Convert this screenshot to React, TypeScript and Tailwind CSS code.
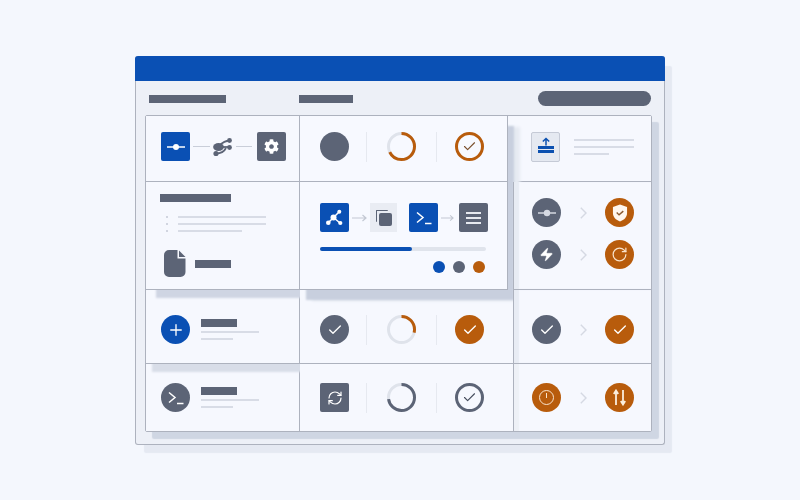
import type React from 'react';
import { Check, Plus, RefreshCw, RotateCw, Zap } from 'lucide-react';
import { FaCog } from 'react-icons/fa';

const SQUARE = 'flex h-[29px] w-[29px] shrink-0 items-center justify-center rounded-[2px]';
const CIRCLE = 'flex h-[29px] w-[29px] shrink-0 items-center justify-center rounded-full';

function Bar({ className }: { className: string }) {
  return <div className={`bg-[#5c6476] ${className}`} />;
}

function Line({ className }: { className: string }) {
  return <div className={`h-[2px] bg-[#d8dce6] ${className}`} />;
}

function Chevron() {
  return (
    <svg viewBox="0 0 7 12" className="h-[12px] w-[7px] shrink-0" fill="none" stroke="#d5d9e3" strokeWidth="1.4">
      <path d="M0.8 0.8 6 6 0.8 11.2" />
    </svg>
  );
}

function Ring({ percent, color }: { percent: number; color: string }) {
  return (
    <svg viewBox="0 0 29 29" className="h-[29px] w-[29px] shrink-0 -rotate-90" fill="none" strokeWidth="3">
      <circle cx="14.5" cy="14.5" r="13" stroke="#dfe3eb" />
      <circle cx="14.5" cy="14.5" r="13" stroke={color} pathLength={100} strokeDasharray={`${percent} 100`} />
    </svg>
  );
}

function Terminal({ size = 20 }: { size?: number }) {
  return (
    <svg width={size} height={size} viewBox="0 0 20 20" fill="none" stroke="white" strokeWidth="1.5">
      <path d="M3 4.500 9 9.500 3 14.500" />
      <path d="M11 15.500h6.500" />
    </svg>
  );
}

function SliderGlyph({ tint = 'white', dotR = 3 }: { tint?: string; dotR?: number }) {
  return (
    <svg width="20" height="10" viewBox="0 0 20 10" fill="none" stroke={tint} strokeWidth="1.5">
      <path d="M1 5h18" />
      <circle cx="10" cy="5" r={dotR} fill={tint} stroke="none" />
    </svg>
  );
}

function Fork() {
  return (
    <svg width="20" height="20" viewBox="0 0 20 20" className="shrink-0" fill="none" stroke="#5c6476" strokeWidth="1.8">
      <path d="M7 8 C9 6 11 4 16.500 3.500" />
      <path d="M7 10 H16.500" />
      <path d="M3 16.500 C7 16.500 11 15 13 11" />
      <ellipse cx="5.500" cy="10" rx="5.400" ry="4" fill="#5c6476" stroke="none" />
      <circle cx="16.500" cy="3.500" r="2.400" fill="#5c6476" stroke="none" />
      <circle cx="16.500" cy="10.500" r="2.400" fill="#5c6476" stroke="none" />
      <circle cx="3" cy="16.500" r="2.600" fill="#5c6476" stroke="none" />
    </svg>
  );
}

function Spokes() {
  return (
    <svg width="17" height="17" viewBox="0 0 17 17" fill="white" stroke="white" strokeWidth="1.500">
      <path d="M7.500 8.500 13.500 2.500M7.500 8.500 2 14M7.500 8.500 14 14" />
      <circle cx="7.500" cy="8.500" r="3" stroke="none" />
      <circle cx="13.300" cy="2.700" r="2" stroke="none" />
      <circle cx="2.300" cy="13.700" r="2.300" stroke="none" />
      <circle cx="14.300" cy="14" r="2.100" stroke="none" />
    </svg>
  );
}

function ShieldCheck() {
  return (
    <svg width="16" height="18" viewBox="0 0 17 19">
      <path d="M8.500 0.500 16 3v6.500c0 4.200-3 7.400-7.500 9C4 16.900 1 13.700 1 9.500V3z" fill="#fff7ee" />
      <path d="M5 9l2.500 2.500L12 7.500" fill="none" stroke="#8a5a30" strokeWidth="1.500" />
    </svg>
  );
}

function SwapArrows() {
  return (
    <svg width="13" height="17" viewBox="0 0 13 17" fill="none" stroke="#fbeedd" strokeWidth="1.800">
      <path d="M3 16V2M0.800 5 3 1.500 5.200 5" />
      <path d="M10 1v14M7.800 12 10 15.500 12.200 12" />
    </svg>
  );
}

function Upload() {
  return (
    <svg width="18" height="20" viewBox="0 0 18 20" fill="none" stroke="#0b50b0">
      <path d="M9 8.500V1.500M5.800 4.500 9 1.500l3.200 3" strokeWidth="1.500" />
      <path d="M1 10.500h16M1 14.500h16" strokeWidth="3" />
    </svg>
  );
}

function DocIcon() {
  return (
    <svg width="22" height="27" viewBox="0 0 22 27" className="shrink-0">
      <path d="M5 0H13.500V8.500H21.500V22a5 5 0 0 1-5 5H5a5 5 0 0 1-5-5V5a5 5 0 0 1 5-5z" fill="#5c6476" />
      <path d="M15 0.500 21.500 7H15z" fill="#5c6476" />
    </svg>
  );
}

function Arrow({ className }: { className: string }) {
  return (
    <svg viewBox="0 0 15 8" className={`h-[8px] w-[15px] shrink-0 ${className}`} fill="none" stroke="#c3c8d3" strokeWidth="1.200">
      <path d="M0 4h14M10.500 1 14 4l-3.500 3" />
    </svg>
  );
}

function Divider({ className }: { className: string }) {
  return <div className={`h-[30px] w-px shrink-0 bg-[#e6e9f0] ${className}`} />;
}

function MidRow({ className, children }: { className: string; children: [React.ReactNode, React.ReactNode, React.ReactNode] }) {
  return (
    <div className={`flex items-center pl-[20px] ${className}`}>
      {children[0]}
      <Divider className="ml-[17px] mr-[20px]" />
      {children[1]}
      <Divider className="ml-[20px] mr-[18px]" />
      {children[2]}
    </div>
  );
}

function Flow({ from, to, className = '' }: { from: React.ReactNode; to: React.ReactNode; className?: string }) {
  return (
    <div className={`flex items-center ${className}`}>
      {from}
      <div className="ml-[19px] mr-[18px]">
        <Chevron />
      </div>
      {to}
    </div>
  );
}

function Gray({ children }: { children: React.ReactNode }) {
  return <div className={`${CIRCLE} bg-[#5c6476] text-white`}>{children}</div>;
}

function Orange({ children }: { children: React.ReactNode }) {
  return <div className={`${CIRCLE} bg-[#b85c0c] text-white`}>{children}</div>;
}

function ListRow({ icon, className }: { icon: React.ReactNode; className: string }) {
  return (
    <div className={`flex items-center gap-[11px] border-b border-r border-[#adb2be] bg-[#f6f8fe] pl-[15px] ${className}`}>
      {icon}
      <div className="flex flex-col">
        <Bar className="h-[8px] w-[36px]" />
        <Line className="mt-[4px] w-[58px]" />
        <Line className="mt-[5px] w-[32px]" />
      </div>
    </div>
  );
}

export default function App() {
  return (
    <div className="h-screen overflow-hidden bg-[#f4f7fd] pt-[56px]">
      <div className="mx-auto w-[530px] rounded-[3px] border-x border-b border-[#adb2be] bg-[#edf0f7] pb-[12px] shadow-[8px_9px_1px_-1px_#e5e9f2]">
        <div className="-mx-px h-[25px] rounded-t-[3px] bg-[#0a50b4]" />

        <div className="flex h-[34px] items-center pl-[13px] pr-[13px]">
          <Bar className="mt-[2px] h-[8px] w-[77px]" />
          <Bar className="ml-[73px] mt-[2px] h-[8px] w-[54px]" />
          <div className="ml-auto h-[15px] w-[113px] rounded-full bg-[#5c6476]" />
        </div>

        <div className="ml-[9px] grid w-[507px] grid-cols-[154px_208px_5px_138px] grid-rows-[66px_108px_74px_67px] rounded-[2px] border border-[#adb2be] bg-[#f6f8fe] shadow-[7px_7px_1px_#cfd6e3]">
          {/* row 1 left: pipeline */}
          <div className="flex items-center border-b border-r border-[#adb2be] bg-[#f6f8fe] pb-[4px] pl-[15px]">
            <div className={`${SQUARE} bg-[#0a50b4]`}>
              <SliderGlyph />
            </div>
            <div className="ml-[3px] mr-[3px] h-px w-[17px] bg-[#c9ced9]" />
            <Fork />
            <div className="ml-[3px] mr-[5px] h-px w-[16px] bg-[#c9ced9]" />
            <div className={`${SQUARE} bg-[#5c6476] text-white`}>
              <FaCog size={15} />
            </div>
          </div>

          {/* raised card, spans two rows */}
          <div className="relative z-20 row-span-2 flex flex-col border-b border-r border-[#adb2be] bg-[#f7f9ff] shadow-[6px_10px_2px_#c8cfde,12px_11px_3px_#e6eaf2]">
            <MidRow className="h-[66px] border-b border-[#adb2be] pb-[4px]">
              {[
                <div key="a" className="h-[29px] w-[29px] shrink-0 rounded-full bg-[#5c6476]" />,
                <Ring key="b" percent={68} color="#b85c0c" />,
                <div key="c" className={`${CIRCLE} border-[3px] border-[#b85c0c] text-[#7a4f2c]`}>
                  <Check size={15} strokeWidth={1.8} />
                </div>,
              ]}
            </MidRow>
            <div className="flex flex-1 flex-col px-[20px] pt-[21px]">
              <div className="flex items-center">
                <div className={`${SQUARE} bg-[#0a50b4]`}>
                  <Spokes />
                </div>
                <Arrow className="ml-[3px] mr-[3px]" />
                <div className="flex h-[29px] w-[27px] shrink-0 items-center justify-center bg-[#e9ecf3]">
                  <div className="relative h-[16px] w-[16px]">
                    <div className="absolute left-0 top-0 h-[12px] w-[12px] rounded-[1px] border-l border-t border-[#5c6476]" />
                    <div className="absolute bottom-0 right-0 h-[13px] w-[13px] rounded-[2px] bg-[#5c6476]" />
                  </div>
                </div>
                <div className={`${SQUARE} ml-[12px] bg-[#0a50b4]`}>
                  <Terminal />
                </div>
                <Arrow className="ml-[3px] mr-[3px] !w-[13px]" />
                <div className={`${SQUARE} ml-[2px] flex-col gap-[3px] bg-[#5c6476]`}>
                  <div className="h-[2px] w-[15px] bg-[#e6e9ef]" />
                  <div className="h-[2px] w-[15px] bg-[#e6e9ef]" />
                  <div className="h-[2px] w-[15px] bg-[#e6e9ef]" />
                </div>
              </div>
              <div className="mt-[15px] h-[4px] w-[166px] rounded-full bg-[#e0e4ec]">
                <div className="h-full w-[92px] rounded-full bg-[#0a50b4]" />
              </div>
              <div className="mt-[10px] flex justify-end gap-[8px] pr-[2px]">
                <div className="h-[12px] w-[12px] rounded-full bg-[#0a50b4]" />
                <div className="h-[12px] w-[12px] rounded-full bg-[#5c6476]" />
                <div className="h-[12px] w-[12px] rounded-full bg-[#b85c0c]" />
              </div>
            </div>
          </div>

          {/* row 1 right: upload */}
          <div className="relative z-10 col-span-2 flex items-center border-b border-[#adb2be] bg-[#f6f8fe] pb-[4px] pl-[23px]">
            <div className="flex h-[30px] w-[29px] shrink-0 items-center justify-center rounded-[2px] border border-[#c5cad6] bg-[#e5e9f1]">
              <Upload />
            </div>
            <div className="ml-[14px] flex flex-col gap-[5px]">
              <Line className="w-[60px]" />
              <Line className="w-[60px]" />
              <Line className="w-[35px]" />
            </div>
          </div>

          {/* row 2 left: document */}
          <div className="relative z-[12] flex flex-col border-b border-r border-[#adb2be] bg-[#f6f8fe] pl-[14px] pt-[12px] shadow-[10px_8px_2px_#cfd5e3]">
            <Bar className="h-[8px] w-[71px]" />
            <div className="ml-[6px] mt-[14px] flex flex-col gap-[5px]">
              <div className="flex items-center gap-[10px]">
                <div className="h-[2px] w-[2px] rounded-full bg-[#c5cad6]" />
                <Line className="w-[88px]" />
              </div>
              <div className="flex items-center gap-[10px]">
                <div className="h-[2px] w-[2px] rounded-full bg-[#c5cad6]" />
                <Line className="w-[88px]" />
              </div>
              <div className="flex items-center gap-[10px]">
                <div className="h-[2px] w-[2px] rounded-full bg-[#c5cad6]" />
                <Line className="w-[64px]" />
              </div>
            </div>
            <div className="ml-[4px] mt-[18px] flex items-center gap-[9px]">
              <DocIcon />
              <Bar className="h-[8px] w-[36px]" />
            </div>
          </div>

          <div className="col-start-4 relative z-30 flex flex-col gap-[13px] border-b border-l border-[#adb2be] bg-[#f6f8fe] pl-[18px] pt-[16px] shadow-[inset_5px_0_1px_#e8ecf4]">
            <Flow
              from={
                <Gray>
                  <SliderGlyph tint="#d5d9e2" dotR={3.2} />
                </Gray>
              }
              to={
                <Orange>
                  <ShieldCheck />
                </Orange>
              }
            />
            <Flow
              from={
                <Gray>
                  <Zap size={15} fill="white" strokeWidth={0.8} />
                </Gray>
              }
              to={
                <Orange>
                  <RotateCw size={17} strokeWidth={1.7} className="text-[#f8e3cc]" />
                </Orange>
              }
            />
          </div>

          {/* row 3 */}
          <ListRow
            className="relative z-[11] pt-[6px] shadow-[6px_8px_2px_#d8dde8]"
            icon={
              <div className={`${CIRCLE} bg-[#0a50b4] text-white`}>
                <Plus size={18} strokeWidth={1.8} />
              </div>
            }
          />
          <MidRow className="relative z-[15] col-span-2 border-b border-[#adb2be] bg-[#f6f8fe] pt-[6px]">
            {[
              <Gray key="a">
                <Check size={16} strokeWidth={2} />
              </Gray>,
              <Ring key="b" percent={29} color="#b85c0c" />,
              <Orange key="c">
                <Check size={16} strokeWidth={2} />
              </Orange>,
            ]}
          </MidRow>
          <Flow
            className="relative z-30 border-b border-l border-[#adb2be] bg-[#f6f8fe] pl-[18px] pt-[6px] shadow-[inset_5px_0_1px_#e8ecf4]"
            from={
              <Gray>
                <Check size={16} strokeWidth={2} />
              </Gray>
            }
            to={
              <Orange>
                <Check size={16} strokeWidth={2} />
              </Orange>
            }
          />

          {/* row 4 */}
          <ListRow
            className="relative z-[5] border-b-0"
            icon={
              <Gray>
                <Terminal />
              </Gray>
            }
          />
          <MidRow className="relative z-[15] col-span-2 bg-[#f6f8fe]">
            {[
              <div key="a" className={`${SQUARE} bg-[#5c6476] text-white`}>
                <RefreshCw size={16} strokeWidth={1.800} />
              </div>,
              <Ring key="b" percent={73} color="#5c6476" />,
              <div key="c" className={`${CIRCLE} border-[3px] border-[#5c6476] text-[#454c5c]`}>
                <Check size={15} strokeWidth={1.8} />
              </div>,
            ]}
          </MidRow>
          <Flow
            className="relative z-30 border-l border-[#adb2be] bg-[#f6f8fe] pl-[18px] shadow-[inset_5px_0_1px_#eef1f7]"
            from={
              <Orange>
                <div className="flex h-[15px] w-[15px] justify-center rounded-full border-[1.5px] border-[#f8e3cc] pt-[2px]">
                  <div className="h-[5px] w-[1.5px] bg-[#f8e3cc]" />
                </div>
              </Orange>
            }
            to={
              <Orange>
                <SwapArrows />
              </Orange>
            }
          />
        </div>
      </div>
    </div>
  );
}
